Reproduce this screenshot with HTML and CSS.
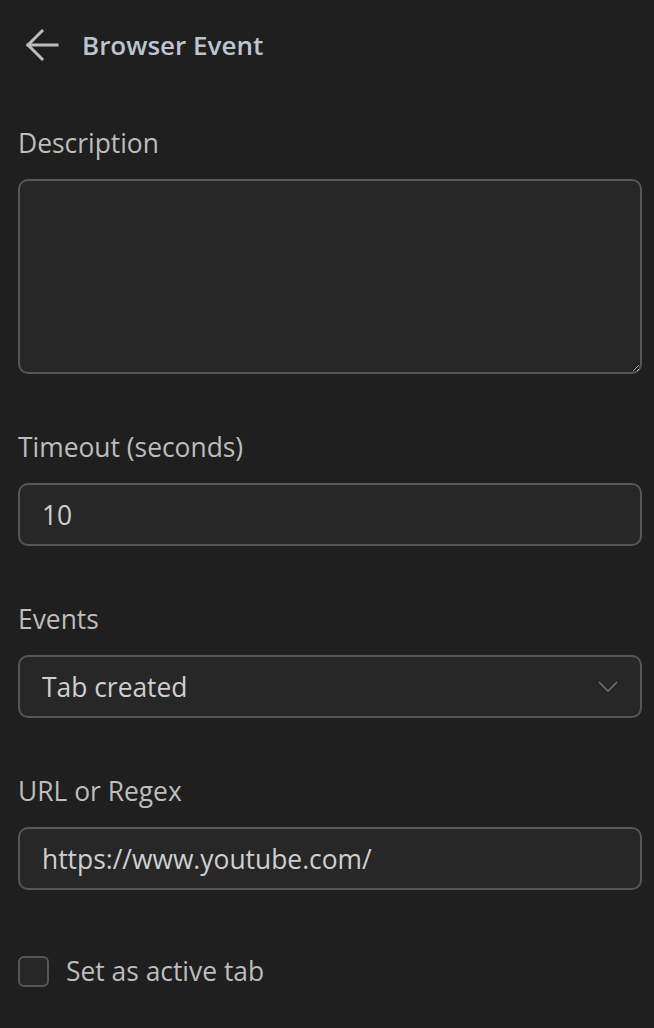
FILE: index.html
```html
<!DOCTYPE html>
<html lang="en">
<head>
    <meta charset="UTF-8">
    <meta name="viewport" content="width=device-width, initial-scale=1.0">
    <title>Browser Event</title>
    <link rel="stylesheet" href="styles.css">
</head>
<body>
    <!-- Cabecera con boton de volver -->
    <div class="header">
        <button class="back" type="button" aria-label="Back">
            <svg width="34" height="34" viewBox="0 0 34 34" fill="none" stroke="#bdbdbd" stroke-width="3" stroke-linecap="square">
                <path d="M3 17 H32"/>
                <path d="M17 3 L3 17 L17 31"/>
            </svg>
        </button>
        <h1>Browser Event</h1>
    </div>

    <div class="field">
        <label class="label" for="description">Description</label>
        <textarea id="description" class="input textarea"></textarea>
    </div>

    <div class="field">
        <label class="label" for="timeout">Timeout (seconds)</label>
        <input id="timeout" class="input" type="text" value="10">
    </div>

    <div class="field">
        <label class="label" for="events">Events</label>
        <div class="select-wrap">
            <select id="events" class="input select">
                <option>Tab created</option>
            </select>
            <svg class="chevron" width="20" height="12" viewBox="0 0 20 12" fill="none" stroke="#6e6e6e" stroke-width="1.6">
                <path d="M1 1 L10 10 L19 1"/>
            </svg>
        </div>
    </div>

    <div class="field">
        <label class="label" for="url">URL or Regex</label>
        <input id="url" class="input" type="text" value="https://www.youtube.com/">
    </div>

    <label class="check">
        <input type="checkbox" class="box">
        <span>Set as active tab</span>
    </label>
</body>
</html>
```

FILE: styles.css
```css
body {
    margin: 0;
    padding: 0 12px 0 18px;
    background-color: #1f1f1f;
    font-family: "Open Sans", "Noto Sans", sans-serif;
    color: #bfbfbf;
}

.header {
    display: flex;
    align-items: center;
    height: 90px;
    margin-bottom: 35px;
}

.back {
    display: flex;
    padding: 0;
    margin-left: 7px;
    background: none;
    border: none;
    cursor: pointer;
}

.header h1 {
    margin: 0 0 0 23px;
    font-size: 26px;
    font-weight: 600;
    color: #bcc5cf;
}

.field {
    margin-bottom: 55px;
}

.label {
    display: block;
    height: 36px;
    line-height: 36px;
    margin-bottom: 18px;
    font-size: 26.4px;
    color: #bdbdbd;
}

.input {
    display: block;
    box-sizing: border-box;
    width: 100%;
    height: 63px;
    padding: 0 22px;
    background-color: #272727;
    border: 2px solid #575757;
    border-radius: 10px;
    font-family: inherit;
    font-size: 26.4px;
    color: #cfcfcf;
    outline: none;
}

.textarea {
    height: 195px;
    padding: 14px 22px;
    resize: vertical;
    color-scheme: dark;
}

.select-wrap {
    position: relative;
}

.select {
    appearance: none;
    -webkit-appearance: none;
}

.chevron {
    position: absolute;
    right: 24px;
    top: 26px;
    pointer-events: none;
}

.check {
    display: flex;
    align-items: center;
    gap: 17px;
    margin-top: 63px;
    font-size: 26.4px;
    color: #bdbdbd;
    cursor: pointer;
}

.box {
    appearance: none;
    -webkit-appearance: none;
    width: 31px;
    height: 31px;
    margin: 0;
    background-color: #272727;
    border: 2px solid #575757;
    border-radius: 6px;
}
```
